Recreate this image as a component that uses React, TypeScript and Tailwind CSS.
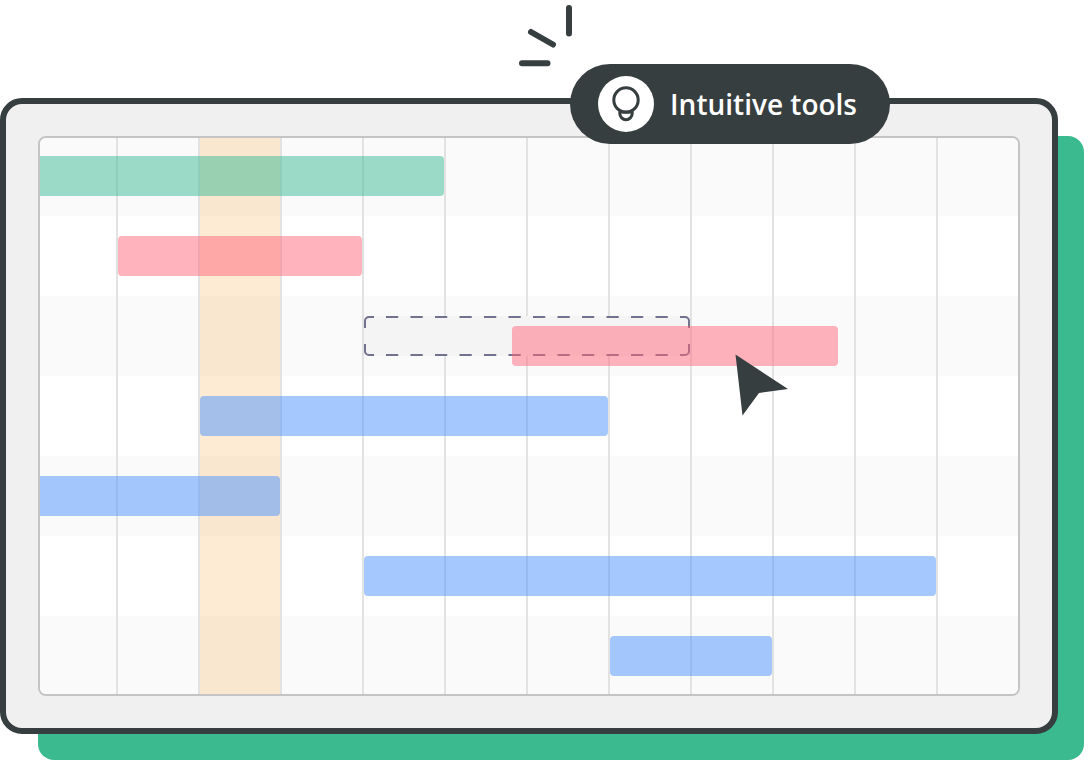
import { clsx } from "clsx";

type Tone = "green" | "pink" | "blue";

type Task = {
  id: number;
  label: string;
  tone: Tone;
  span: string;
  shape: string;
};

const COLUMNS = 12;
const TODAY_COLUMN = 2;

const GRID = "grid grid-cols-[78fr_repeat(10,82fr)_80fr]";

const TONES: Record<Tone, string> = {
  green: "bg-[#3aba92]/50",
  pink: "bg-[#ff677b]/50",
  blue: "bg-[#4b93ff]/50",
};

const TASKS: Task[] = [
  { id: 1, label: "Task 1", tone: "green", span: "col-start-1 col-end-6", shape: "rounded-r" },
  { id: 2, label: "Task 2", tone: "pink", span: "col-start-2 col-end-5", shape: "rounded" },
  { id: 3, label: "Task 3", tone: "pink", span: "col-start-5 col-end-9", shape: "rounded" },
  { id: 4, label: "Task 4", tone: "blue", span: "col-start-3 col-end-8", shape: "rounded" },
  { id: 5, label: "Task 5", tone: "blue", span: "col-start-1 col-end-4", shape: "rounded-r" },
  { id: 6, label: "Task 6", tone: "blue", span: "col-start-5 col-end-12", shape: "rounded" },
  { id: 7, label: "Task 7", tone: "blue", span: "col-start-8 col-end-10", shape: "rounded" },
];

const DRAGGED_ID = 3;

function BulbIcon() {
  return (
    <svg viewBox="0 0 56 56" className="size-14" fill="none" stroke="#373e40" strokeWidth="3" aria-hidden="true">
      <circle cx="28" cy="24" r="12.2" />
      <path d="M21.8 36h12.4v1.5a6.2 6.2 0 0 1-12.4 0z" strokeLinejoin="round" />
    </svg>
  );
}

function Sparks() {
  return (
    <svg
      viewBox="0 0 56 64"
      className="absolute right-full bottom-full h-16 w-14 overflow-visible"
      fill="none"
      stroke="#373e40"
      strokeWidth="6"
      strokeLinecap="round"
      aria-hidden="true"
    >
      <path d="M55 8v25.5M17 32l22 12.5M8 63.2h25.5" />
    </svg>
  );
}

function Cursor() {
  return (
    <svg viewBox="0 0 54 62" className="absolute top-7 left-[223px] h-[62px] w-[54px]" aria-hidden="true">
      <path d="M.5 .5 53 35 24 39 7.5 61.5z" fill="#373e40" />
    </svg>
  );
}

/* Empty slot that the dragged task leaves behind */
function DropSlot() {
  return (
    <svg viewBox="0 0 326 40" preserveAspectRatio="none" className="h-10 w-full" fill="none" aria-hidden="true">
      <rect width="326" height="40" rx="4" fill="#f4f4f4" />
      <g stroke="#71738e" strokeWidth="2">
        <path d="M22 1h282M22 39h282" strokeDasharray="12.25 12.25" />
        <path d="M10 1H5a4 4 0 0 0-4 4v7M316 1h5a4 4 0 0 1 4 4v7" />
        <path d="M10 39H5a4 4 0 0 1-4-4v-7M316 39h5a4 4 0 0 0 4-4v-7" />
      </g>
    </svg>
  );
}

function Row({ task, index }: { task: Task; index: number }) {
  const dragged = task.id === DRAGGED_ID;

  return (
    <li
      className={clsx(
        GRID,
        "items-start",
        index === 0 && "h-[78px] pt-[18px]",
        index > 0 && "pt-5",
        index > 0 && index < TASKS.length - 1 && "h-20",
        index === TASKS.length - 1 && "h-[78px]",
      )}
    >
      {dragged ? (
        <div className={clsx("relative mr-0.5", task.span)}>
          <DropSlot />
          <div
            aria-label={task.label}
            className={clsx("absolute top-2.5 left-[148px] h-10 w-full", task.shape, TONES[task.tone])}
          >
            <Cursor />
          </div>
        </div>
      ) : (
        <div aria-label={task.label} className={clsx("mr-0.5 h-10", task.span, task.shape, TONES[task.tone])} />
      )}
    </li>
  );
}

function Chart() {
  return (
    <div className="grid overflow-hidden rounded-lg border-2 border-[#c4c4c4] bg-white">
      {/* Row stripes */}
      <div className="col-start-1 row-start-1 flex flex-col">
        {TASKS.map((task, i) => (
          <div
            key={task.id}
            className={clsx(
              i === 0 || i === TASKS.length - 1 ? "h-[78px]" : "h-20",
              i % 2 === 0 && "bg-[#fafafa]",
            )}
          />
        ))}
      </div>

      {/* Day columns */}
      <div className={clsx(GRID, "col-start-1 row-start-1")}>
        {Array.from({ length: COLUMNS }, (_, i) => (
          <div
            key={i}
            className={clsx(
              i < COLUMNS - 1 && "border-r-2 border-[#e2e2e2]",
              i === TODAY_COLUMN && "bg-[#f9be72]/30 bg-clip-padding",
            )}
          />
        ))}
      </div>

      {/* Tasks */}
      <ul className="relative col-start-1 row-start-1">
        {TASKS.map((task, i) => (
          <Row key={task.id} task={task} index={i} />
        ))}
      </ul>
    </div>
  );
}

export default function App() {
  return (
    <main className="grid pt-[98px] pr-1 font-['Open_Sans','Noto_Sans',sans-serif]">
      <div className="col-start-1 row-start-1 mt-[38px] ml-[38px] rounded-2xl bg-[#3cba8f]" />
      <section className="relative col-start-1 row-start-1 mr-[26px] mb-[26px] rounded-[22px] border-6 border-[#373e40] bg-[#f0f0f0] p-8">
        <Chart />

        <div className="absolute -top-10 right-[162px] flex h-20 items-center gap-4 rounded-full bg-[#373e40] pr-[33px] pl-7">
          <Sparks />
          <span className="rounded-full bg-white">
            <BulbIcon />
          </span>
          <h2 className="text-[28px] leading-8 font-semibold whitespace-nowrap text-white">Intuitive tools</h2>
        </div>
      </section>
    </main>
  );
}
